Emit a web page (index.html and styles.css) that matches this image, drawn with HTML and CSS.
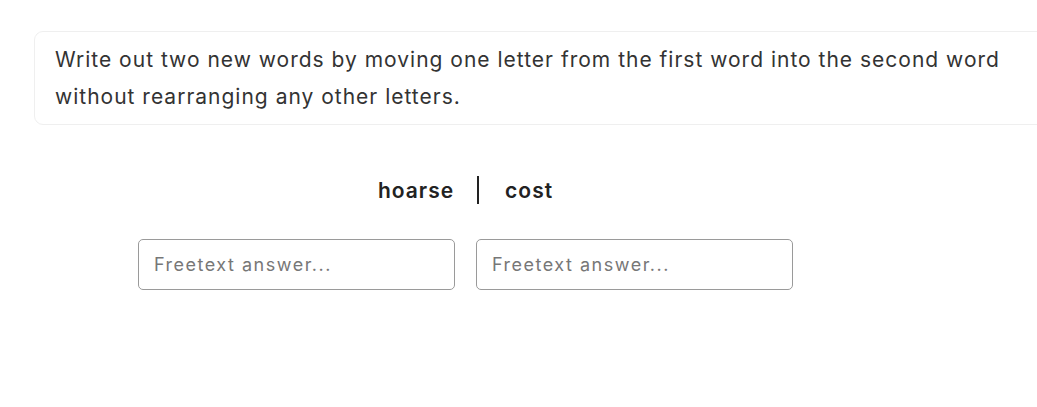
FILE: index.html
```html
<!DOCTYPE html>
<html lang="en">
<head>
  <meta charset="UTF-8">
  <title>Move a Letter</title>
  <link rel="stylesheet" href="styles.css">
</head>
<body>

  <!-- question prompt -->
  <div class="page">
    <div class="prompt">
      Write out two new words by moving one letter from the first word into the second word
      without rearranging any other letters.
    </div>

    <!-- word pair + answers -->
    <div class="puzzle">
      <div class="pair">
        <span class="word">hoarse</span>
        <span class="divider"></span>
        <span class="word">cost</span>
      </div>

      <div class="answers">
        <input type="text" class="answer" placeholder="Freetext answer...">
        <input type="text" class="answer" placeholder="Freetext answer...">
      </div>
    </div>
  </div>

</body>
</html>
```

FILE: styles.css
```css
html, body {
  margin: 0;
  overflow: hidden;
}

body {
  font-family: Inter, "Noto Sans", sans-serif;
  background: #fff;
  color: #333;
}

.page {
  width: 1100px;
  padding-top: 31px;
}

.prompt {
  width: 990px;
  margin-left: 34px;
  padding: 9px 20px 9px;
  border: 1px solid #efefef;
  border-radius: 9px;
  font-size: 21px;
  letter-spacing: 1px;
  line-height: 37px;
  color: #333;
}

.puzzle {
  width: 931px;
  display: flex;
  flex-direction: column;
  align-items: center;
  padding-top: 50px;
}

.pair {
  display: flex;
  align-items: center;
  height: 30px;
}

.word {
  font-size: 21px;
  font-weight: 600;
  letter-spacing: 1px;
  color: #222;
}

.divider {
  width: 2px;
  height: 28px;
  margin: 0 26px 0 23px;
  background: #222;
}

.answers {
  display: flex;
  gap: 21px;
  margin-top: 34px;
}

.answer {
  width: 317px;
  height: 51px;
  box-sizing: border-box;
  padding: 0 15px;
  border: 1px solid #9a9a9a;
  border-radius: 5px;
  font-family: Inter, "Noto Sans", sans-serif;
  font-size: 18px;
  letter-spacing: 1.5px;
  color: #333;
  outline: none;
}

.answer::placeholder {
  color: #777;
}
```
